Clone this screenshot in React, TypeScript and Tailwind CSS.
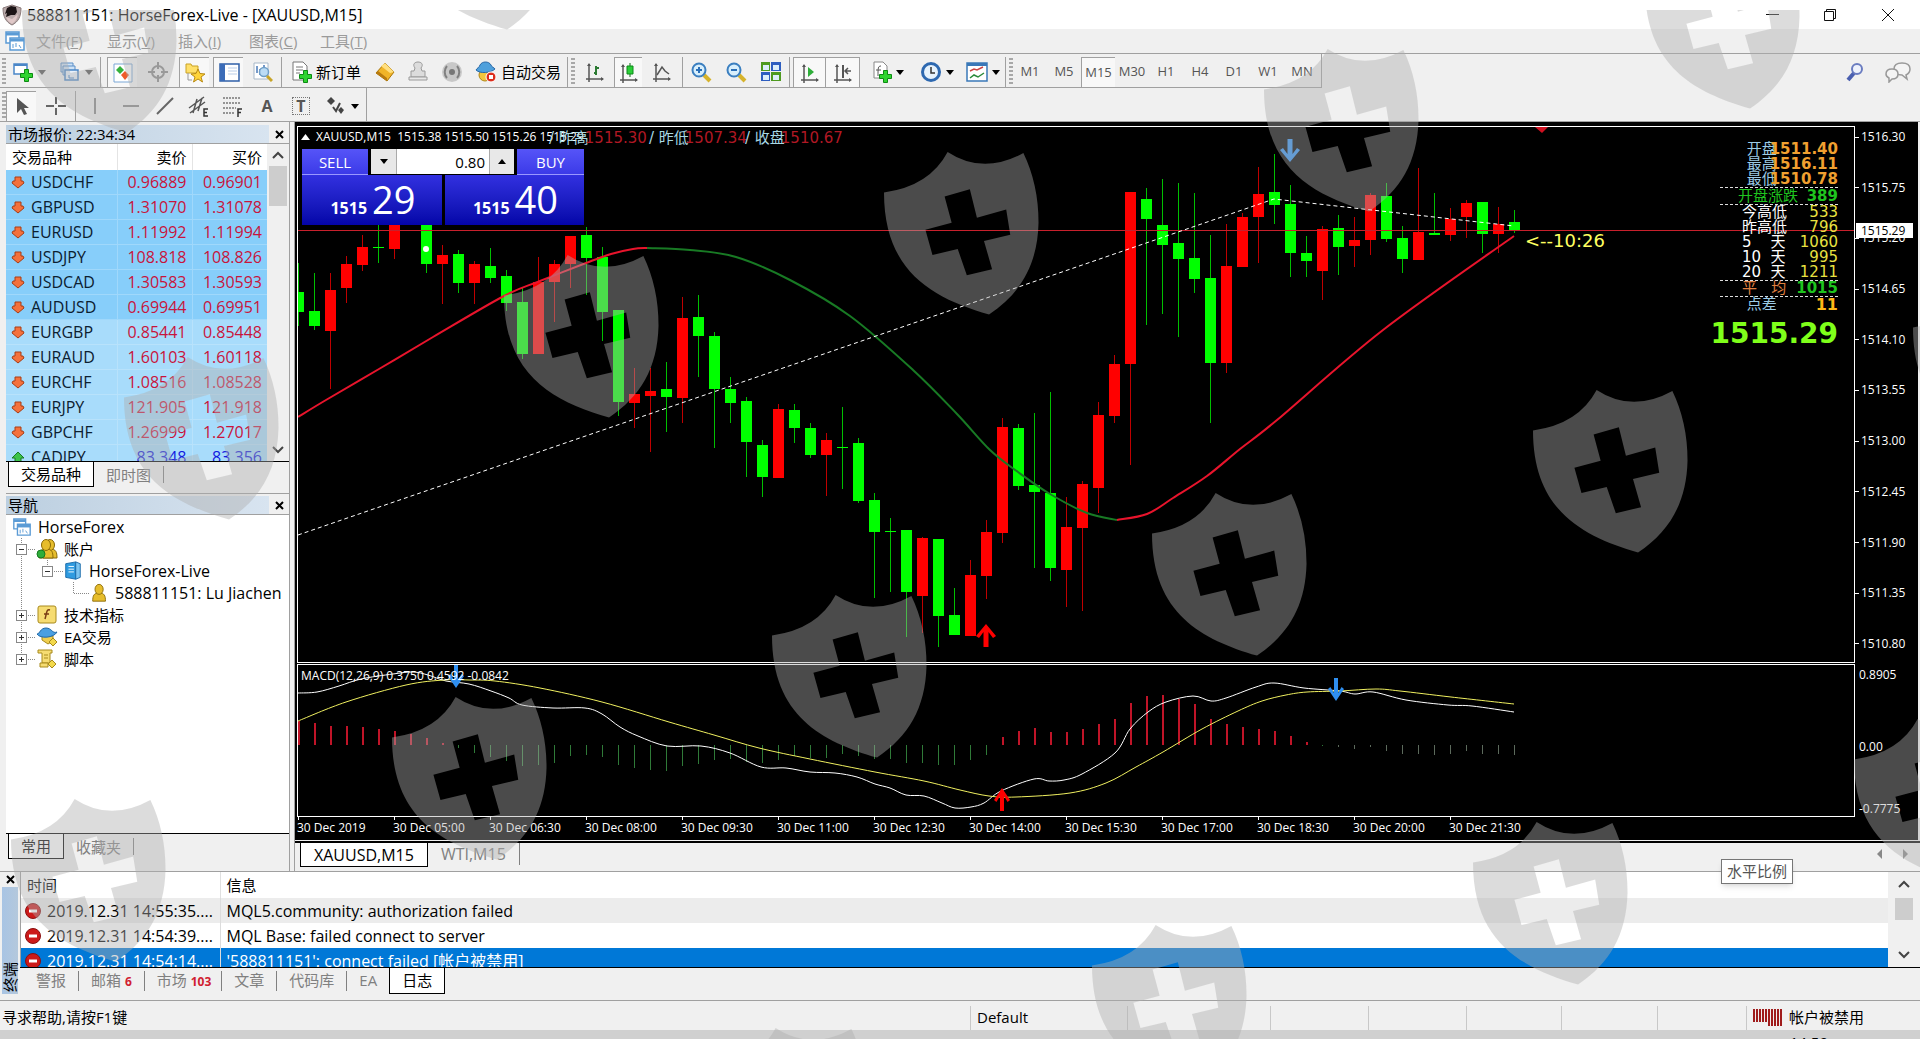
import type { ReactNode } from "react";

type Candle = [
  color: "g" | "r",
  high: number,
  top: number,
  bottom: number,
  low: number
];

type Point = [number, number];

const STEP = 16;
const LEFT = 298;

const menus = ["文件(F)", "显示(V)", "插入(I)", "图表(C)", "工具(T)"];

const quotes = [
  { symbol: "USDCHF", bid: "0.96889", ask: "0.96901" },
  { symbol: "GBPUSD", bid: "1.31070", ask: "1.31078" },
  { symbol: "EURUSD", bid: "1.11992", ask: "1.11994" },
  { symbol: "USDJPY", bid: "108.818", ask: "108.826" },
  { symbol: "USDCAD", bid: "1.30583", ask: "1.30593" },
  { symbol: "AUDUSD", bid: "0.69944", ask: "0.69951" },
  { symbol: "EURGBP", bid: "0.85441", ask: "0.85448" },
  { symbol: "EURAUD", bid: "1.60103", ask: "1.60118" },
  { symbol: "EURCHF", bid: "1.08516", ask: "1.08528" },
  { symbol: "EURJPY", bid: "121.905", ask: "121.918" },
  { symbol: "GBPCHF", bid: "1.26999", ask: "1.27017" },
  { symbol: "CADJPY", bid: "83.348", ask: "83.356", up: true },
];

const logs = [
  { time: "2019.12.31 14:55:35....", text: "MQL5.community: authorization failed" },
  { time: "2019.12.31 14:54:39....", text: "MQL Base: failed connect to server" },
  { time: "2019.12.31 14:54:14....", text: "'588811151': connect failed [帐户被禁用]" },
];

const prices = [
  "1516.30",
  "1515.75",
  "1515.20",
  "1514.65",
  "1514.10",
  "1513.55",
  "1513.00",
  "1512.45",
  "1511.90",
  "1511.35",
  "1510.80",
];

const times = [
  "30 Dec 2019",
  "30 Dec 05:00",
  "30 Dec 06:30",
  "30 Dec 08:00",
  "30 Dec 09:30",
  "30 Dec 11:00",
  "30 Dec 12:30",
  "30 Dec 14:00",
  "30 Dec 15:30",
  "30 Dec 17:00",
  "30 Dec 18:30",
  "30 Dec 20:00",
  "30 Dec 21:30",
];

const candles: Candle[] = [
  ["g", 263, 292, 312, 326],
  ["g", 273, 311, 326, 330],
  ["r", 273, 290, 331, 389],
  ["r", 256, 264, 288, 303],
  ["r", 235, 247, 265, 271],
  ["g", 222, 247, 248, 263],
  ["r", 222, 224, 249, 259],
  ["g", 205, 208, 220, 222],
  ["g", 222, 224, 264, 273],
  ["r", 245, 255, 264, 304],
  ["g", 250, 254, 283, 293],
  ["r", 261, 264, 283, 304],
  ["g", 248, 266, 278, 283],
  ["g", 270, 276, 303, 311],
  ["g", 288, 302, 354, 359],
  ["r", 257, 282, 354, 354],
  ["r", 260, 264, 282, 322],
  ["r", 236, 236, 264, 288],
  ["g", 227, 235, 258, 295],
  ["g", 247, 257, 312, 341],
  ["g", 310, 310, 402, 416],
  ["r", 368, 394, 403, 428],
  ["r", 368, 391, 396, 452],
  ["g", 362, 389, 397, 432],
  ["r", 297, 318, 398, 423],
  ["g", 295, 317, 336, 377],
  ["g", 332, 336, 389, 448],
  ["g", 377, 389, 403, 423],
  ["g", 397, 401, 442, 477],
  ["g", 440, 445, 477, 497],
  ["r", 404, 409, 478, 478],
  ["g", 404, 410, 428, 443],
  ["g", 423, 428, 455, 458],
  ["r", 433, 440, 455, 496],
  ["g", 407, 447, 448, 489],
  ["g", 438, 443, 501, 503],
  ["g", 493, 500, 532, 598],
  ["g", 518, 531, 532, 592],
  ["g", 530, 530, 592, 637],
  ["r", 537, 538, 596, 633],
  ["g", 539, 539, 616, 647],
  ["g", 588, 615, 635, 635],
  ["r", 560, 575, 636, 636],
  ["r", 520, 532, 576, 599],
  ["r", 418, 427, 533, 543],
  ["g", 424, 428, 486, 490],
  ["g", 413, 485, 492, 568],
  ["g", 392, 493, 568, 581],
  ["r", 497, 527, 570, 607],
  ["r", 481, 484, 528, 611],
  ["r", 402, 415, 488, 513],
  ["r", 355, 364, 416, 423],
  ["r", 192, 192, 364, 465],
  ["g", 188, 199, 219, 325],
  ["g", 179, 225, 245, 314],
  ["g", 183, 243, 259, 337],
  ["g", 193, 258, 279, 293],
  ["g", 235, 278, 363, 423],
  ["r", 224, 266, 363, 373],
  ["r", 213, 217, 267, 267],
  ["r", 167, 194, 217, 263],
  ["g", 154, 192, 205, 224],
  ["g", 185, 204, 253, 277],
  ["g", 236, 253, 261, 277],
  ["r", 226, 229, 271, 300],
  ["g", 215, 228, 247, 275],
  ["r", 217, 240, 246, 267],
  ["r", 193, 195, 240, 255],
  ["g", 183, 196, 239, 242],
  ["g", 226, 238, 259, 273],
  ["r", 168, 232, 260, 260],
  ["g", 193, 233, 235, 235],
  ["r", 208, 219, 235, 241],
  ["r", 200, 203, 217, 238],
  ["g", 202, 202, 234, 253],
  ["r", 207, 224, 234, 253],
  ["g", 210, 222, 231, 233],
];

// bar ends, the zero level is 746
const histogram = [
  722, 724, 727, 727, 728, 730, 732, 735, 739, 744, 749, 754, 758, 762, 767,
  766, 764, 757, 756, 758, 766, 769, 771, 772, 767, 765, 761, 760, 763, 764,
  761, 757, 759, 759, 755, 757, 760, 760, 764, 764, 766, 766, 761, 756, 738,
  732, 729, 733, 733, 730, 725, 720, 704, 697, 696, 700, 705, 720, 725, 728,
  730, 732, 737, 743, 747, 748, 750, 748, 752, 755, 755, 756, 755, 752, 755,
  755, 756,
];

const maUp1: Point[] = [
  [298, 417], [326, 400], [379, 369], [433, 337], [504, 296], [540, 281],
  [586, 263], [611, 254], [633, 249], [647, 248],
];

const maDown: Point[] = [
  [647, 248], [690, 250], [736, 257], [790, 280], [850, 316], [913, 370],
  [957, 414], [990, 450], [1018, 472], [1050, 494], [1087, 513], [1117, 520],
];

const maUp2: Point[] = [
  [1117, 520], [1147, 514], [1173, 498], [1207, 476], [1240, 449],
  [1277, 420], [1383, 330], [1514, 236],
];

const macdLine: Point[] = [
  [298, 694], [317, 693], [339, 687], [361, 680], [393, 675], [413, 673],
  [428, 676], [446, 682], [469, 685], [491, 692], [509, 699], [522, 706],
  [553, 709], [585, 709], [602, 715], [620, 728], [638, 737], [667, 747],
  [701, 747], [730, 754], [761, 768], [786, 769], [810, 773], [835, 774],
  [857, 778], [875, 785], [890, 789], [906, 796], [924, 797], [942, 804],
  [955, 809], [971, 808], [984, 804], [1001, 792], [1034, 780], [1049, 782],
  [1064, 781], [1082, 775], [1115, 754], [1130, 730], [1148, 713],
  [1166, 703], [1193, 697], [1211, 702], [1226, 699], [1256, 688],
  [1274, 684], [1304, 689], [1340, 692], [1355, 695], [1373, 693],
  [1406, 701], [1448, 706], [1472, 707], [1514, 713],
];

const signalLine: Point[] = [
  [298, 722], [346, 703], [406, 686], [444, 681], [469, 681], [495, 682],
  [540, 689], [602, 703], [669, 723], [714, 736], [759, 749], [810, 760],
  [875, 773], [924, 782], [960, 791], [989, 797], [1016, 798], [1070, 794],
  [1106, 784], [1136, 768], [1163, 753], [1202, 730], [1238, 712],
  [1262, 702], [1286, 696], [1307, 693], [1340, 692], [1376, 690],
  [1400, 692], [1451, 698], [1514, 705],
];

const shields: Point[] = [
  [22, -30], [402, -133], [124, 357], [504, 255], [884, 152], [1264, 49],
  [1645, -54], [1913, 287], [1533, 390], [1152, 493], [772, 595], [392, 697],
  [11, 799], [1854, 719], [1473, 822], [1092, 925], [712, 1028],
];

function smooth(points: Point[]) {
  let d = `M${points[0][0]} ${points[0][1]}`;

  for (let i = 0; i < points.length - 1; i++) {
    const a = points[i - 1] ?? points[i];
    const b = points[i];
    const c = points[i + 1];
    const e = points[i + 2] ?? c;

    d += ` C${b[0] + (c[0] - a[0]) / 6} ${b[1] + (c[1] - a[1]) / 6}`;
    d += ` ${c[0] - (e[0] - b[0]) / 6} ${c[1] - (e[1] - b[1]) / 6}`;
    d += ` ${c[0]} ${c[1]}`;
  }

  return d;
}

function Icon({
  size = 22,
  children,
}: {
  size?: number;
  children: ReactNode;
}) {
  return (
    <svg
      width={size}
      height={size}
      viewBox="0 0 22 22"
      fill="none"
      className="shrink-0"
      aria-hidden="true"
    >
      {children}
    </svg>
  );
}

function GreenPlus({ x = 8, y = 8 }: { x?: number; y?: number }) {
  return (
    <path
      transform={`translate(${x} ${y})`}
      d="M4.500 .5h4v4h4v4h-4v4h-4v-4h-4v-4h4z"
      fill="#2fd42f"
      stroke="#0c8a12"
    />
  );
}

function WindowsIcon({ size = 22 }: { size?: number }) {
  return (
    <Icon size={size}>
      <path d="M2 2h13v11H2z" fill="#fff" stroke="#5b9bd5" strokeWidth="1.500" />
      <path d="M2 4h13" stroke="#5b9bd5" strokeWidth="3" />
      <path d="M6 8h14v12H6z" fill="#fff" stroke="#5b9bd5" strokeWidth="1.500" />
      <path d="M6 10h14" stroke="#5b9bd5" strokeWidth="3" />
      <path d="M9 14v4M12 13v4M15 15l2 3" stroke="#5b9bd5" />
    </Icon>
  );
}

function Caret({ light }: { light?: boolean }) {
  return (
    <svg width="8" height="5" viewBox="0 0 8 5" className="shrink-0">
      <path d="M0 0h8L4 5z" fill={light ? "#555" : "#000"} />
    </svg>
  );
}

function Grip() {
  return (
    <div className="w-[4px] h-[28px] shrink-0 bg-[repeating-linear-gradient(#a8a8a8_0_2px,#f0f0f0_2px_4px)]" />
  );
}

function Divider() {
  return <div className="w-px h-[30px] shrink-0 bg-[#a0a0a0]" />;
}

function Tool({
  width = "w-[34px]",
  pressed,
  label,
  children,
}: {
  width?: string;
  pressed?: boolean;
  label: string;
  children: ReactNode;
}) {
  return (
    <button
      type="button"
      aria-label={label}
      aria-pressed={pressed}
      className={`${width} h-[30px] shrink-0 flex items-center justify-center gap-1 ${
        pressed
          ? "bg-[#f8f8f8] border-t border-l border-[#a0a0a0]"
          : ""
      }`}
    >
      {children}
    </button>
  );
}

function Axes({ children }: { children?: ReactNode }) {
  return (
    <Icon>
      <path d="M5 3v15h14M2 18h3M5 18v3" stroke="#555" strokeWidth="1.500" />
      <path d="M3 5l2-3 2 3zM17 16l3 2-3 2z" fill="#555" />
      {children}
    </Icon>
  );
}

function TitleBar() {
  return (
    <header className="h-[29px] shrink-0 bg-white flex items-center pl-[2px]">
      <svg width="20" height="22" viewBox="0 0 20 22">
        <path d="M1 4l9-3 9 3c0 9-3 14-9 17C4 18 1 13 1 4z" fill="#b9a9a9" stroke="#8a7a7a" />
        <path d="M5 4l4-2 5 1 1 5-2 3h-4L4 13l1-4-2 1z" fill="#1c1416" />
        <path d="M4 13l6 2 6-5c-1 5-3 8-6 10-3-2-5-4-6-7z" fill="#e0c8c8" />
      </svg>

      <h1 className="ml-[5px] text-base">
        588811151: HorseForex-Live - [XAUUSD,M15]
      </h1>

      <div className="ml-auto flex pr-[3px]">
        <button type="button" aria-label="最小化" className="w-[58px] h-[28px] flex justify-center items-center">
          <svg width="14" height="14"><path d="M1 6.500h13" stroke="#111" /></svg>
        </button>
        <button type="button" aria-label="还原" className="w-[58px] h-[28px] flex justify-center items-center">
          <svg width="14" height="14" fill="none" stroke="#111">
            <path d="M1.500 3.500h9v9h-9zM3.500 3.500v-2h9v9h-2" />
          </svg>
        </button>
        <button type="button" aria-label="关闭" className="w-[58px] h-[28px] flex justify-center items-center">
          <svg width="14" height="14" stroke="#111"><path d="M1 1l12 12M13 1L1 13" /></svg>
        </button>
      </div>
    </header>
  );
}

function MenuBar() {
  return (
    <nav className="h-[25px] shrink-0 flex items-center pl-1 border-b border-[#a0a0a0] text-[15px] text-[#9a9a9a]">
      <WindowsIcon />
      {menus.map((name) => (
        <button key={name} type="button" className="w-[71px] pl-[10px] text-left">
          {name.slice(0, 3)}
          <span className="underline">{name[3]}</span>)
        </button>
      ))}
    </nav>
  );
}

function MainToolbar() {
  return (
    <div className="h-[34px] shrink-0 flex items-center">
      <div className="w-[1322px] h-[34px] shrink-0 flex items-center pt-[3px] pl-[2px] border-r border-b border-[#a0a0a0] text-[15px]">
        <Grip />
        <Tool label="新图表" width="w-[46px]">
          <Icon>
            <path d="M2 3h13v10H2z" fill="#fff" stroke="#4a86c8" strokeWidth="1.500" />
            <path d="M2 4h13" stroke="#4a86c8" strokeWidth="2" />
            <GreenPlus />
          </Icon>
          <Caret light />
        </Tool>
        <Tool label="图表配置" width="w-[48px]">
          <Icon>
            <path d="M2 2h12v9H2z" fill="#cfe2f5" stroke="#5a8fc8" />
            <path d="M4 5h12v9H4z" fill="#cfe2f5" stroke="#5a8fc8" />
            <path d="M6 9h13v10H6z" fill="#e8f1fb" stroke="#4a86c8" strokeWidth="1.500" />
            <path d="M10 14v3h5" stroke="#4a86c8" />
          </Icon>
          <Caret light />
        </Tool>
        <Divider />
        <div className="w-[6px]" />
        <Tool label="市场报价" width="w-[30px]" pressed>
          <Icon>
            <path d="M2 2h18v18H2z" fill="#fff" stroke="#7aa7d6" />
            <path d="M8 4l4 4-4 4-4-4z" fill="#35b13c" />
            <path d="M13 9l4 4-4 5-4-5z" fill="#ee5a28" />
          </Icon>
        </Tool>
        <Tool label="十字准线" width="w-[42px]">
          <Icon>
            <circle cx="11" cy="11" r="6" stroke="#8a8a8a" strokeWidth="2" />
            <path d="M11 1v7M11 14v7M1 11h7M14 11h7" stroke="#8a8a8a" strokeWidth="2" />
          </Icon>
        </Tool>
        <Tool label="导航" width="w-[30px]" pressed>
          <Icon>
            <path d="M2 2h5l1 2h6v7H2z" fill="#ffe06a" stroke="#c9a227" />
            <path d="M4 11v7h4" stroke="#999" />
            <path d="M14 7l2 4.500 5 .5-4 3 1.500 5-4.500-3-4.500 3 1.500-5-4-3 5-.5z" fill="#ffd43a" stroke="#b98a12" />
          </Icon>
        </Tool>
        <div className="w-[4px]" />
        <Tool label="终端" width="w-[30px]" pressed>
          <Icon>
            <path d="M2 2h19v17H2z" fill="#fff" stroke="#2f5fa8" strokeWidth="1.500" />
            <path d="M2 2h5v17H2z" fill="#3b6cb8" />
            <path d="M10 6h9M10 9h9M10 12h9" stroke="#b9cde8" />
          </Icon>
        </Tool>
        <Tool label="策略测试" width="w-[38px]">
          <Icon>
            <path d="M3 2h14v16H3z" fill="#fff" stroke="#a8b8c8" />
            <path d="M6 5v7M9 8v6M13 4v5" stroke="#4a7ab8" strokeWidth="1.500" />
            <circle cx="13" cy="11" r="4.500" fill="#bcdcf5" stroke="#6f9fc8" strokeWidth="1.500" />
            <path d="M16 15l5 5" stroke="#c7a428" strokeWidth="3" />
          </Icon>
        </Tool>
        <Divider />
        <Tool label="新订单" width="w-[87px]">
          <Icon>
            <path d="M3 1h10l4 4v14H3z" fill="#fff" stroke="#777" />
            <path d="M6 6h7M6 9h7M6 12h4" stroke="#777" />
            <GreenPlus x={9} y={9} />
          </Icon>
          新订单
        </Tool>
        <Tool label="MetaEditor" width="w-[32px]">
          <Icon>
            <path d="M11 2l9 9-7 9-11-8z" fill="#f0b429" stroke="#a87408" />
            <path d="M11 2l9 9-4 1-9-7z" fill="#ffdf80" />
            <path d="M2 12l11 8v-3L4 10z" fill="#b87a10" />
          </Icon>
        </Tool>
        <Tool label="打印">
          <Icon>
            <path d="M8 7c-3-4 0-6 3-6s6 2 3 6l1 3h3v6H4v-6h3z" fill="#dcdcdc" stroke="#9a9a9a" />
            <path d="M2 16h18v3H2z" fill="#e8e8e8" stroke="#9a9a9a" />
          </Icon>
        </Tool>
        <Tool label="信号">
          <Icon>
            <circle cx="11" cy="11" r="10" fill="#c8c8c8" />
            <circle cx="11" cy="11" r="3" fill="#777" />
            <path d="M6 5a9 9 0 000 12M16 5a9 9 0 010 12" stroke="#808080" strokeWidth="2" />
          </Icon>
        </Tool>
        <Tool label="自动交易" width="w-[98px]">
          <Icon>
            <circle cx="10" cy="14" r="6" fill="#f2c53d" stroke="#b08818" />
            <path d="M1 9c1-2 3-2 4-5 2-4 9-4 11 0 1 3 3 2 4 4-4 4-15 5-19 1z" fill="#4ea0dc" stroke="#2868a8" />
            <circle cx="16" cy="16" r="5" fill="#dc2d1c" stroke="#fff" />
            <path d="M14 14h4v4h-4z" fill="#fff" />
          </Icon>
          自动交易
        </Tool>
        <Divider />
        <div className="w-[3px]" />
        <Grip />
        <Tool label="柱状图" width="w-[39px]">
          <Axes>
            <path d="M12 5v9M10 12h2M12 7h3" stroke="#2b7a32" strokeWidth="2" />
          </Axes>
        </Tool>
        <Tool label="蜡烛图" width="w-[28px]" pressed>
          <Axes>
            <path d="M12 1v14" stroke="#0c6a16" />
            <path d="M9 4h6v8H9z" fill="#2bcf38" stroke="#0c8a18" />
          </Axes>
        </Tool>
        <Tool label="折线图" width="w-[40px]">
          <Axes>
            <path d="M6 14l5-8 3 4 4 3" stroke="#555" strokeWidth="1.500" />
          </Axes>
        </Tool>
        <Divider />
        <Tool label="放大" width="w-[35px]">
          <Icon>
            <path d="M14 14l6 6" stroke="#d6b32c" strokeWidth="4" />
            <circle cx="9" cy="9" r="6.500" fill="#d8effc" stroke="#3b7fc0" strokeWidth="2" />
            <path d="M9 6v6M6 9h6" stroke="#2a6fb8" strokeWidth="2" />
          </Icon>
        </Tool>
        <Tool label="缩小" width="w-[35px]">
          <Icon>
            <path d="M14 14l6 6" stroke="#d6b32c" strokeWidth="4" />
            <circle cx="9" cy="9" r="6.500" fill="#d8effc" stroke="#3b7fc0" strokeWidth="2" />
            <path d="M6 9h6" stroke="#2a6fb8" strokeWidth="2" />
          </Icon>
        </Tool>
        <Tool label="平铺窗口" width="w-[36px]">
          <Icon>
            <path d="M1 1h9v9H1zM11 11h10v9H11z" fill="#4e9a1f" />
            <path d="M11 1h10v9H11zM1 11h9v9H1z" fill="#2e5ec0" />
            <path d="M3 4h6v5H3zM13 4h6v5h-6zM3 14h6v5H3zM13 14h6v5h-6z" fill="#dceefa" />
          </Icon>
        </Tool>
        <Divider />
        <div className="w-[3px]" />
        <Tool label="自动滚动" width="w-[32px]" pressed>
          <Axes>
            <path d="M9 5l6 5-6 5z" fill="#2fae3a" />
          </Axes>
        </Tool>
        <Tool label="图表平移" width="w-[34px]" pressed>
          <Axes>
            <path d="M11 3v13" stroke="#555" strokeWidth="2" />
            <path d="M19 9h-6M16 6l-3 3 3 3" stroke="#555" strokeWidth="1.500" />
          </Axes>
        </Tool>
        <Divider />
        <Tool label="技术指标" width="w-[54px]">
          <Icon>
            <path d="M4 1h9l4 4v12H4z" fill="#fff" stroke="#888" />
            <path d="M11 5c-3 0-3 2-3 10M6 9h5" stroke="#555" />
            <GreenPlus x={9} y={9} />
          </Icon>
          <Caret />
        </Tool>
        <Tool label="周期" width="w-[46px]">
          <Icon>
            <circle cx="11" cy="11" r="8.500" fill="#e6f2fc" stroke="#2d68b0" strokeWidth="3" />
            <path d="M11 6v6h4" stroke="#333" strokeWidth="1.500" />
          </Icon>
          <Caret />
        </Tool>
        <Tool label="模板" width="w-[45px]">
          <Icon>
            <path d="M1 2h20v18H1z" fill="#fff" stroke="#3a78b8" strokeWidth="1.500" />
            <path d="M1 3.500h20" stroke="#3a78b8" strokeWidth="3" />
            <path d="M4 10l4-2 3 1 6-3" stroke="#c44" strokeWidth="1.500" />
            <path d="M4 17l4-3 4 2 6-4" stroke="#2a8a3a" strokeWidth="1.500" />
          </Icon>
          <Caret />
        </Tool>
        <Divider />
        <div className="w-[3px]" />
        <Grip />
        <div className="flex text-[13px] text-[#555]">
          {["M1", "M5", "M15", "M30", "H1", "H4", "D1", "W1", "MN"].map((p) => (
            <Tool key={p} label={p} pressed={p === "M15"}>
              {p}
            </Tool>
          ))}
        </div>
      </div>

      <div className="ml-auto flex items-center gap-5 pr-2 pt-[2px]">
        <button type="button" aria-label="搜索">
          <svg width="18" height="20" viewBox="0 0 18 20" fill="none">
            <path d="M8 11l-6 7" stroke="#4a5fb0" strokeWidth="4" />
            <circle cx="11" cy="7" r="5" fill="#eef2fc" stroke="#6a7cc0" strokeWidth="2" />
          </svg>
        </button>
        <button type="button" aria-label="聊天">
          <svg width="28" height="22" viewBox="0 0 28 22" fill="#f4f4f4" stroke="#999" strokeWidth="1.500">
            <path d="M18 2c5 0 8 2 8 6s-2 5-4 6l1 4-5-4c-5 0-8-2-8-6s3-6 8-6z" />
            <path d="M8 8c4 0 6 2 6 5s-2 5-6 5l-3 3v-4c-2-1-3-2-3-4 0-3 2-5 6-5z" />
          </svg>
        </button>
      </div>
    </div>
  );
}

function DrawToolbar() {
  return (
    <div className="h-[34px] shrink-0 border-b border-[#a0a0a0]">
      <div className="w-[367px] h-full flex items-center pt-[3px] pl-[2px] border-r border-[#a0a0a0]">
        <Grip />
        <div className="w-[2px]" />
        <Tool label="光标" width="w-[30px]" pressed>
          <Icon>
            <path d="M6 2v15l4-4 3 6 3-1-3-6h5z" fill="#555" />
          </Icon>
        </Tool>
        <Tool label="十字" width="w-[39px]">
          <Icon>
            <path d="M11 2v7M11 13v7M1 11h8M13 11h8" stroke="#666" strokeWidth="2" />
          </Icon>
        </Tool>
        <Divider />
        <Tool label="垂直线" width="w-[38px]">
          <Icon><path d="M11 3v16" stroke="#666" strokeWidth="1.500" /></Icon>
        </Tool>
        <Tool label="水平线">
          <Icon><path d="M3 11h16" stroke="#666" strokeWidth="1.500" /></Icon>
        </Tool>
        <Tool label="趋势线">
          <Icon><path d="M3 19L19 3" stroke="#666" strokeWidth="2" /></Icon>
        </Tool>
        <Tool label="等距通道">
          <Icon>
            <path d="M1 13L16 2M2 18L17 7M5 18L9 4M10 16l4-13" stroke="#555" strokeWidth="1.500" />
            <path d="M20 14h-4v7h4M16 17.500h3" stroke="#333" strokeWidth="1.500" />
          </Icon>
        </Tool>
        <Tool label="斐波纳契">
          <Icon>
            <path d="M1 3h17M1 8h17M1 13h13M1 18h11" stroke="#777" strokeWidth="1.500" strokeDasharray="2 1" />
            <path d="M20 14h-4v8M16 17.500h3" stroke="#333" strokeWidth="1.500" />
          </Icon>
        </Tool>
        <Tool label="文字">
          <span className="text-base font-bold text-[#555]">A</span>
        </Tool>
        <Tool label="文字标签">
          <span className="size-[18px] border border-dotted border-[#777] text-base leading-4 font-bold text-[#555]">
            T
          </span>
        </Tool>
        <Tool label="箭头" width="w-[48px]">
          <Icon>
            <path d="M6 2l4 4-4 4-4-4zM16 12l3 3-3 4-3-4z" fill="#444" />
            <path d="M8 12l3 4 4-8" stroke="#444" strokeWidth="2" />
          </Icon>
          <Caret />
        </Tool>
      </div>
    </div>
  );
}

function PanelTitle({ children }: { children: ReactNode }) {
  return (
    <div className="h-[19px] shrink-0 flex items-center border-b border-[#a0a0a0]">
      <h2 className="flex-1 h-full pl-[2px] flex items-center text-[15px] leading-[18px] bg-gradient-to-r from-[#bccfe0] to-[#d8e4f0]">
        {children}
      </h2>
      <button type="button" aria-label="关闭面板" className="w-[20px] flex justify-center">
        <svg width="9" height="9" stroke="#000" strokeWidth="2">
          <path d="M1 1l7 7M8 1L1 8" />
        </svg>
      </button>
    </div>
  );
}

function PanelTabs({ active, other }: { active: string; other: string }) {
  return (
    <div className="h-[26px] shrink-0 flex pl-[2px] border-t border-black text-[15px]">
      <button type="button" className="h-[25px] px-3 bg-white border border-t-0 border-black">
        {active}
      </button>
      <button type="button" className="my-1 px-3 leading-4 text-[#808080] border-r border-[#808080]">
        {other}
      </button>
    </div>
  );
}

function QuoteArrow({ up }: { up?: boolean }) {
  return (
    <svg width="14" height="13" viewBox="0 0 14 13" className="ml-[5px]">
      {up ? (
        <path d="M7 1l6 6h-3v5H4V7H1z" fill="#3cc44a" stroke="#187a24" />
      ) : (
        <path d="M7 12l6-5-1-2h-2V1H4v4H2L1 7z" fill="#f4713c" stroke="#a83c14" />
      )}
    </svg>
  );
}

function Chevron({ down }: { down?: boolean }) {
  return (
    <svg width="12" height="8" fill="none" stroke="#444" strokeWidth="2">
      <path d={down ? "M1 1l5 5 5-5" : "M1 7l5-5 5 5"} />
    </svg>
  );
}

function MarketWatch() {
  return (
    <section className="h-[362px] shrink-0 flex flex-col">
      <PanelTitle>市场报价: 22:34:34</PanelTitle>

      <div className="flex-1 min-h-0 flex">
        <div className="flex-1 overflow-hidden bg-white">
          <table className="w-full table-fixed border-separate border-spacing-0">
            <thead>
              <tr className="h-[26px] text-[15px]">
                <th className="w-[112px] pl-[6px] text-left font-normal border-r border-[#e4e4e4]">交易品种</th>
                <th className="pr-[5px] text-right font-normal border-r border-[#e4e4e4]">卖价</th>
                <th className="pr-[5px] text-right font-normal">买价</th>
              </tr>
            </thead>
            <tbody>
              {quotes.map((quote, index) => (
                <tr
                  key={quote.symbol}
                  className={`h-[25px] text-base leading-6 *:border-b ${
                    index < 6
                      ? "bg-[#87cefa] *:border-[#a0d8fb]"
                      : "bg-[#a8dcfb] *:border-[#b8e2fb]"
                  } ${quote.up ? "text-[#1018e0]" : "text-[#c8143c]"}`}
                >
                  <td className="border-r text-[#0c2030]">
                    <span className="flex items-center gap-[6px]">
                      <QuoteArrow up={quote.up} />
                      {quote.symbol}
                    </span>
                  </td>
                  <td className="pr-[5px] text-right border-r">{quote.bid}</td>
                  <td className="pr-[5px] text-right">{quote.ask}</td>
                </tr>
              ))}
            </tbody>
          </table>
        </div>

        <div className="w-[22px] shrink-0 flex flex-col items-center py-[7px] bg-[#f0f0f0]">
          <Chevron />
          <div className="w-[18px] h-[40px] mt-[7px] bg-[#cdcdcd]" />
          <div className="mt-auto">
            <Chevron down />
          </div>
        </div>
      </div>

      <PanelTabs active="交易品种" other="即时图" />
    </section>
  );
}

function Branch({
  width,
  box,
  sign,
  trunk = true,
  last,
}: {
  width: number;
  box?: number;
  sign?: "+" | "-";
  trunk?: boolean;
  last?: boolean;
}) {
  return (
    <svg width={width} height="22" fill="none" stroke="#888" className="shrink-0">
      {trunk && (
        <path d={last ? "M15.500 0v11" : "M15.500 0v22"} strokeDasharray="1 1" />
      )}
      {box !== undefined && (
        <>
          <path d={`M${box + 5} 11.500H${width}`} strokeDasharray="1 1" />
          <path d={`M${box}.500 0v6`} strokeDasharray="1 1" />
          <rect x={box - 4.5} y="6.500" width="10" height="10" fill="#fff" />
          <path
            d={`M${box - 2} 11.500h5${sign === "+" ? `M${box}.500 9v5` : ""}`}
            stroke="#333"
          />
        </>
      )}
      {box === undefined && (
        <path d={`M${width - 17}.500 0v11.500H${width - 1}`} strokeDasharray="1 1" />
      )}
    </svg>
  );
}

function Person({ x = 0 }: { x?: number }) {
  return (
    <g transform={`translate(${x} 0)`} fill="#e6bd2c" stroke="#8a6a08">
      <path d="M2 20c0-6 1-9 7-9s7 3 7 9z" />
      <ellipse cx="9" cy="7" rx="4.500" ry="5.500" />
    </g>
  );
}

function Navigator() {
  return (
    <section className="flex-1 min-h-0 flex flex-col">
      <PanelTitle>导航</PanelTitle>

      <ul className="flex-1 min-h-0 overflow-hidden bg-white pt-[1px] text-[15px] leading-[22px]">
        <li className="flex items-center gap-[6px] pl-[6px]">
          <WindowsIcon size={20} />
          <span className="text-base leading-[22px]">HorseForex</span>
        </li>
        <li className="flex items-center">
          <Branch width={30} box={15} sign="-" />
          <Icon>
            <Person x={5} />
            <Person x={1} />
            <circle cx="5" cy="16" r="4" fill="#2fae3a" stroke="#177a20" />
          </Icon>
          <span className="pl-[6px]">账户</span>
        </li>
        <li className="flex items-center">
          <Branch width={57} box={41} sign="-" />
          <Icon size={20}>
            <path d="M3 3l11-2v19L3 18z" fill="#2f9be0" stroke="#1668a8" />
            <path d="M14 1l5 2v15l-5 2z" fill="#7cc4f0" stroke="#1668a8" />
            <path d="M6 6h6M6 9h6M6 12h6" stroke="#fff" />
          </Icon>
          <span className="pl-[6px] text-base leading-[22px]">HorseForex-Live</span>
        </li>
        <li className="flex items-center">
          <Branch width={84} />
          <Icon size={20}>
            <Person x={1} />
          </Icon>
          <span className="pl-[5px] text-base leading-[22px]">588811151: Lu Jiachen</span>
        </li>
        <li className="flex items-center">
          <Branch width={30} box={15} sign="+" />
          <Icon>
            <rect x="2" y="2" width="18" height="17" rx="2" fill="#f6dc72" stroke="#a88a1c" />
            <path d="M14 6c-4-1-3 3-5 9M8 10h5" stroke="#7a3c14" strokeWidth="1.500" />
          </Icon>
          <span className="pl-[6px]">技术指标</span>
        </li>
        <li className="flex items-center">
          <Branch width={30} box={15} sign="+" />
          <Icon>
            <path d="M6 10h11v5l-5 3-6-4z" fill="#f0cf50" stroke="#a88a1c" />
            <path d="M1 8c3 0 3-6 9-6s6 6 11 4c-3 6-17 7-20 2z" fill="#4a9fe0" stroke="#1f68a8" />
            <path d="M17 12l4 4-4 4-4-4z" fill="#f3d94c" stroke="#a88a1c" />
          </Icon>
          <span className="pl-[6px]">EA交易</span>
        </li>
        <li className="flex items-center">
          <Branch width={30} box={15} sign="+" last />
          <Icon>
            <path d="M2 2h14v3h-2v10H6V5H2z" fill="#f6dc72" stroke="#a88a1c" />
            <path d="M8 7h4M8 10h4M4 15h8v4H4z" fill="#f6dc72" stroke="#a88a1c" />
            <path d="M16 12l4 4-4 4-4-4z" fill="#f3d94c" stroke="#a88a1c" />
          </Icon>
          <span className="pl-[6px]">脚本</span>
        </li>
      </ul>

      <PanelTabs active="常用" other="收藏夹" />
    </section>
  );
}

function Arrow({
  x,
  y,
  up,
  small,
}: {
  x: number;
  y: number;
  up?: boolean;
  small?: boolean;
}) {
  return (
    <path
      transform={`translate(${x} ${y}) scale(${small ? 0.8 : 1} ${up ? -1 : 1})`}
      d="M-2.500-11h5V4L7-2l3 2-10 12L-10 0l3-2 4.500 6z"
      fill={up ? "#ff0000" : "#2f8ff0"}
    />
  );
}

function PriceChart() {
  return (
    <svg className="block w-full h-full" aria-label="XAUUSD M15">
      <g transform="translate(-298 -127)">
        {candles.map(([color, high, top, bottom, low], i) => {
          const x = LEFT + i * STEP;
          const fill = color === "g" ? "#00ff00" : "#ff0000";

          return (
            <g key={i} fill={fill}>
              <rect x={x} y={high} width="1" height={low - high} opacity="0.75" />
              <rect x={x - 5} y={top} width="11" height={bottom - top} />
            </g>
          );
        })}
        <circle cx="426" cy="249" r="3" fill="#fff" />
        <path d="M298 230.500H1855" stroke="#c8202c" />
        <g fill="none" strokeWidth="2">
          <path d={smooth(maUp1)} stroke="#e8142c" />
          <path d={smooth(maDown)} stroke="#187a24" />
          <path d={smooth(maUp2)} stroke="#e8142c" />
        </g>
        <path d="M298 535L1274 199 1514 226" fill="none" stroke="#fff" strokeDasharray="4 3" />
        <Arrow x={1290} y={150} />
        <Arrow x={986} y={636} up />
        <path d="M1535 127h13l-6 6z" fill="#d01020" />
      </g>
    </svg>
  );
}

function MacdChart() {
  return (
    <svg className="block w-full h-full" aria-label="MACD">
      <g transform="translate(-298 -666)">
        {histogram.map((end, i) => {
          const up = end < 746;

          return (
            <rect
              key={i}
              x={LEFT + i * STEP}
              y={up ? end : 746}
              width={up ? 2 : 1}
              height={Math.abs(end - 746)}
              fill={up ? "#c01428" : i > 64 ? "#5c6a5c" : "#2f7a38"}
            />
          );
        })}
        <path d={smooth(macdLine)} fill="none" stroke="#fff" />
        <path d={smooth(signalLine)} fill="none" stroke="#f0f060" />
        <Arrow x={456} y={677} small />
        <Arrow x={1336} y={690} small />
        <Arrow x={1002} y={801} up small />
      </g>
    </svg>
  );
}

function TradePanel() {
  return (
    <div className="absolute left-[4px] top-[22px] w-[282px] text-white bg-black">
      <div className="flex justify-between">
        <button type="button" className="w-[66px] h-[26px] bg-gradient-to-b from-[#5654f8] to-[#3c3ae8] border-b border-[#9a98ff] text-[15px]">
          SELL
        </button>
        <div className="w-[143px] h-[25px] flex bg-[#e8e8e8] text-black">
          <button type="button" aria-label="减少" className="w-[25px] flex justify-center items-center">
            <Caret />
          </button>
          <input
            aria-label="手数"
            defaultValue="0.80"
            className="w-[94px] min-w-0 px-1 bg-white border-x border-[#aaa] text-right text-[15px]"
          />
          <button type="button" aria-label="增加" className="w-[24px] flex justify-center items-center rotate-180">
            <Caret />
          </button>
        </div>
        <button type="button" className="w-[67px] h-[26px] bg-gradient-to-b from-[#5654f8] to-[#3c3ae8] border-b border-[#9a98ff] text-[15px]">
          BUY
        </button>
      </div>

      <div className="grid grid-cols-2 gap-[3px]">
        {["29", "40"].map((pips) => (
          <div
            key={pips}
            className="h-[50px] flex items-baseline justify-end gap-[5px] pr-[26px] bg-gradient-to-b from-[#3230e0] to-[#0404a8]"
          >
            <span className="text-base font-bold">1515</span>
            <span className="text-[38px] leading-[48px]">{pips}</span>
          </div>
        ))}
      </div>
    </div>
  );
}

const prevDay = [
  { label: "/ 昨高", value: "1515.30", left: "left-[251px]" },
  { label: "/ 昨低", value: "1507.34", left: "left-[351px]" },
  { label: "/ 收盘", value: "1510.67", left: "left-[447px]" },
];

function StatRow({
  label,
  value,
  labelClass = "text-white",
  valueClass = "text-[#e8e040]",
}: {
  label: string;
  value: string;
  labelClass?: string;
  valueClass?: string;
}) {
  return (
    <div className="h-[15px] flex items-center justify-end leading-[15px]">
      <span className={`absolute left-[22px] whitespace-pre ${labelClass}`}>{label}</span>
      <span className={valueClass}>{value}</span>
    </div>
  );
}

function Stats() {
  return (
    <div className="absolute right-[16px] top-[15px] w-[118px] font-['DejaVu_Sans','Noto_Sans_CJK_SC',sans-serif] text-[15px]">
      <StatRow label=" 开盘" value="1511.40" labelClass="text-[#9ccbe6]" valueClass="font-bold text-[#f0a030] z-10" />
      <StatRow label=" 最高" value="1516.11" labelClass="text-[#9ccbe6]" valueClass="font-bold text-[#f0a030] z-10" />
      <StatRow label=" 最低" value="1510.78" labelClass="text-[#9ccbe6]" valueClass="font-bold text-[#f0a030] z-10" />
      <div className="border-y border-dashed border-[#ddd]">
        <div className="h-[16px] flex items-center justify-between pl-[18px] leading-[15px] text-[#1fc41f]">
          <span>开盘涨跌</span>
          <span className="font-bold">389</span>
        </div>
      </div>
      <StatRow label="今高低" value="533" />
      <StatRow label="昨高低" value="796" />
      <StatRow label="5    天" value="1060" />
      <StatRow label="10  天" value="995" />
      <StatRow label="20  天" value="1211" />
      <div className="border-y border-dashed border-[#ddd]">
        <StatRow label="平   均" value="1015" labelClass="text-[#e08040]" valueClass="font-bold text-[#1fc41f]" />
      </div>
      <StatRow label=" 点差" value="11" labelClass="text-[#9ccbe6]" valueClass="text-base font-bold text-[#ffb818]" />
      <div className="mt-[4px] flex justify-end text-[28px] leading-9 font-bold text-[#7fff1a]">
        1515.29
      </div>
    </div>
  );
}

function Chart() {
  return (
    <section className="flex-1 min-w-0 flex flex-col">
      <div className="flex-1 min-h-0 flex flex-col bg-black text-white text-xs mr-[2px] pl-[2px] pt-[4px]">
        <div className="flex-1 min-h-0 flex">
          <div className="relative flex-1 min-w-0 overflow-hidden border border-white">
            <PriceChart />

            <div className="absolute left-[3px] top-0 h-5 flex items-center gap-[6px] text-xs whitespace-pre">
              <svg width="9" height="6"><path d="M0 6h9L4.500 0z" fill="#fff" /></svg>
              XAUUSD,M15  1515.38 1515.50 1515.26 1515.29
            </div>

            {prevDay.map((item) => (
              <div
                key={item.label}
                className={`absolute top-[2px] h-5 flex items-center text-[15px] font-['DejaVu_Sans','Noto_Sans_CJK_SC',sans-serif] whitespace-nowrap text-[#a8d8e4] ${item.left}`}
              >
                {item.label}
                <span className="-ml-[4px] text-[#b01824]">{item.value}</span>
              </div>
            ))}

            <TradePanel />
            <Stats />

            <span className="absolute left-[1227px] top-[104px] text-lg leading-5 font-['DejaVu_Sans',sans-serif] text-[#ffff60]">
              &lt;--10:26
            </span>
          </div>

          <div className="relative w-[63px] shrink-0 pt-[1px]">
            <div className="h-[527px] flex flex-col justify-between">
              {prices.map((price) => (
                <div key={price} className="flex items-center gap-[2px] leading-5">
                  <span className="w-[4px] h-px bg-white" />
                  {price}
                </div>
              ))}
            </div>
            <span className="absolute left-[1px] top-[97px] w-[57px] h-[15px] pl-[5px] leading-[15px] bg-white text-black">
              1515.29
            </span>
          </div>
        </div>

        <div className="h-[153px] mt-[1px] shrink-0 flex">
          <div className="relative flex-1 min-w-0 overflow-hidden border border-white">
            <MacdChart />
            <span className="absolute left-[3px] top-[1px] leading-5">
              MACD(12,26,9) 0.3750 0.4592 -0.0842
            </span>
          </div>
          <div className="w-[63px] shrink-0 flex flex-col pt-[1px] pl-[4px] leading-5">
            <span>0.8905</span>
            <span className="mt-[52px]">0.00</span>
            <span className="mt-[42px]">-0.7775</span>
          </div>
        </div>

        <div className="h-[23px] shrink-0 flex">
          {times.map((time) => (
            <div key={time} className="w-[96px] shrink-0">
              <div className="w-px h-[3px] ml-px bg-white" />
              <div className="leading-4 whitespace-nowrap">{time}</div>
            </div>
          ))}
        </div>
      </div>

      <div className="h-[30px] shrink-0 flex mt-px border-t-2 border-black pl-[5px] text-base">
        <button type="button" className="h-[24px] px-[13px] bg-white border border-t-0 border-black leading-[22px]">
          XAUUSD,M15
        </button>
        <button type="button" className="h-[22px] px-[13px] leading-[22px] text-[#808080] border-r border-[#808080]">
          WTI,M15
        </button>
        <div className="ml-auto flex items-center gap-5 pr-[11px] h-[22px]">
          <svg width="6" height="10"><path d="M5 0v10L0 5z" fill="#888" /></svg>
          <svg width="6" height="10"><path d="M0 0v10l5-5z" fill="#888" /></svg>
        </div>
      </div>
    </section>
  );
}

function Terminal() {
  return (
    <section className="h-[130px] shrink-0 flex flex-col border-b border-[#a0a0a0]">
      <div className="flex-1 flex">
        <div className="w-[20px] shrink-0 flex flex-col items-center border-t border-[#a0a0a0]">
          <button type="button" aria-label="关闭终端" className="py-[3px]">
            <svg width="9" height="9" stroke="#000" strokeWidth="2">
              <path d="M1 1l7 7M8 1L1 8" />
            </svg>
          </button>
          <div className="w-[16px] h-[107px] flex items-end justify-center bg-gradient-to-r from-[#a8c4e4] to-[#b4c8dc]">
            <span className="[writing-mode:vertical-rl] [text-orientation:sideways] rotate-180 pt-[2px] text-[15px] leading-4">
              终端
            </span>
          </div>
        </div>

        <div className="flex-1 min-w-0 flex flex-col">
          <div className="h-[96px] overflow-hidden flex border-t border-[#a0a0a0]">
            <div className="flex-1 min-w-0 border-l border-[#a0a0a0] bg-white">
              <table className="w-full table-fixed text-[15px]">
                <thead>
                  <tr className="h-[26px]">
                    <th className="w-[199px] pl-[6px] text-left font-normal border-r border-[#e0e0e0]">时间</th>
                    <th className="pl-[6px] text-left font-normal">信息</th>
                  </tr>
                </thead>
                <tbody>
                  {logs.map((log, index) => (
                    <tr
                      key={log.time}
                      className={`h-[25px] text-base leading-6 ${
                        index === 2
                          ? "bg-[#0078d7] text-white"
                          : index === 0
                            ? "bg-[#ececec]"
                            : "bg-white"
                      }`}
                    >
                      <td className="border-r border-[#dcdcdc]">
                        <span className="flex items-center gap-[6px] pl-[4px]">
                          <svg width="16" height="16" viewBox="0 0 16 16">
                            <circle cx="8" cy="8" r="7.500" fill="#cc1a1a" stroke="#8a1010" />
                            <path d="M4 8h8" stroke="#fff" strokeWidth="3" />
                          </svg>
                          {log.time}
                        </span>
                      </td>
                      <td className="pl-[6px]">{log.text}</td>
                    </tr>
                  ))}
                </tbody>
              </table>
            </div>
            <div className="w-[32px] shrink-0 flex flex-col items-center py-2 bg-[#f0f0f0]">
              <Chevron />
              <div className="w-[18px] h-[22px] mt-[10px] bg-[#cdcdcd]" />
              <div className="mt-auto">
                <Chevron down />
              </div>
            </div>
          </div>

          <div className="flex items-center h-[26px] border-t border-black text-[15px] text-[#808080] pl-[4px]">
            <button type="button" className="px-3">警报</button>
            <span className="w-px h-[20px] bg-[#808080]" />
            <button type="button" className="px-3">
              邮箱 <b className="text-xs text-[#d02030]">6</b>
            </button>
            <span className="w-px h-[20px] bg-[#808080]" />
            <button type="button" className="pl-3 pr-[10px]">
              市场 <b className="text-xs text-[#d02030]">103</b>
            </button>
            <span className="w-px h-[20px] bg-[#808080]" />
            <button type="button" className="px-3">文章</button>
            <span className="w-px h-[20px] bg-[#808080]" />
            <button type="button" className="px-3">代码库</button>
            <span className="w-px h-[20px] bg-[#808080]" />
            <button type="button" className="px-3">EA</button>
            <button type="button" className="h-[26px] px-3 bg-white border border-t-0 border-black text-black">
              日志
            </button>
          </div>
        </div>
      </div>
    </section>
  );
}

function StatusBar() {
  return (
    <footer className="shrink-0">
      <div className="h-[29px] flex items-center text-[15px] pt-[4px]">
        <span className="flex-1 pl-[2px]">寻求帮助,请按F1键</span>
        <span className="w-[157px] h-[24px] pl-[6px] border-l border-[#c8c8c8]">Default</span>
        <span className="w-[143px] h-[24px] border-l border-[#c8c8c8]" />
        <span className="w-[98px] h-[24px] border-l border-[#c8c8c8]" />
        <span className="w-[98px] h-[24px] border-l border-[#c8c8c8]" />
        <span className="w-[95px] h-[24px] border-l border-[#c8c8c8]" />
        <span className="w-[96px] h-[24px] border-l border-[#c8c8c8]" />
        <span className="w-[89px] h-[24px] border-l border-[#c8c8c8]" />
        <span className="w-[174px] h-[24px] flex items-center gap-[5px] pl-[6px] border-l border-[#c8c8c8]">
          <svg width="31" height="17" fill="#a01c1c">
            {Array.from({ length: 10 }, (_, i) => (
              <rect key={i} x={i * 3} y="0" width="2" height={i < 5 ? 13 : 17} />
            ))}
          </svg>
          帐户被禁用
        </span>
      </div>
      <div className="h-[9px] overflow-hidden bg-[#d0d0d0] pr-[92px] pt-[2px] text-right text-[15px] leading-5">
        14:59
      </div>
    </footer>
  );
}

function Watermark() {
  return (
    <svg
      className="absolute inset-x-0 top-[10px] bottom-0 w-full h-full pointer-events-none"
      aria-hidden="true"
    >
      {shields.map(([x, y]) => (
        <path
          key={`${x}-${y}`}
          transform={`translate(${x} ${y - 10}) scale(1.01)`}
          d="M0 40Q45 34 63 0 98 23 138 1 153 32 153 70C152 112 135 140 104 161 50 145 0 120 0 40zM60 44l7 26-26 7 7 25 25-6 9 26 25-6-8-28 26-6-4-25-29 8-7-28z"
          fill="#aeaeae"
          fillOpacity="0.43"
          fillRule="evenodd"
        />
      ))}
    </svg>
  );
}

export default function App() {
  return (
    <div className="relative h-screen overflow-hidden flex flex-col bg-[#f0f0f0] text-black font-['Open_Sans','Noto_Sans_CJK_SC',sans-serif]">
      <TitleBar />
      <MenuBar />
      <MainToolbar />
      <DrawToolbar />

      <main className="flex-1 min-h-0 flex">
        <aside className="w-[289px] shrink-0 flex flex-col pt-[3px] pb-[12px] pl-[6px]">
          <MarketWatch />
          <div className="h-[7px] shrink-0 border-b border-[#a0a0a0] mb-[2px]" />
          <Navigator />
        </aside>
        <div className="w-[6px] shrink-0 border-l border-r border-[#a0a0a0]" />
        <Chart />
      </main>

      <Terminal />
      <StatusBar />

      <div
        role="tooltip"
        className="absolute right-[127px] bottom-[155px] h-[25px] px-[5px] bg-white border border-[#767676] shadow-md text-[15px] leading-[23px] text-[#555]"
      >
        水平比例
      </div>

      <Watermark />
    </div>
  );
}
